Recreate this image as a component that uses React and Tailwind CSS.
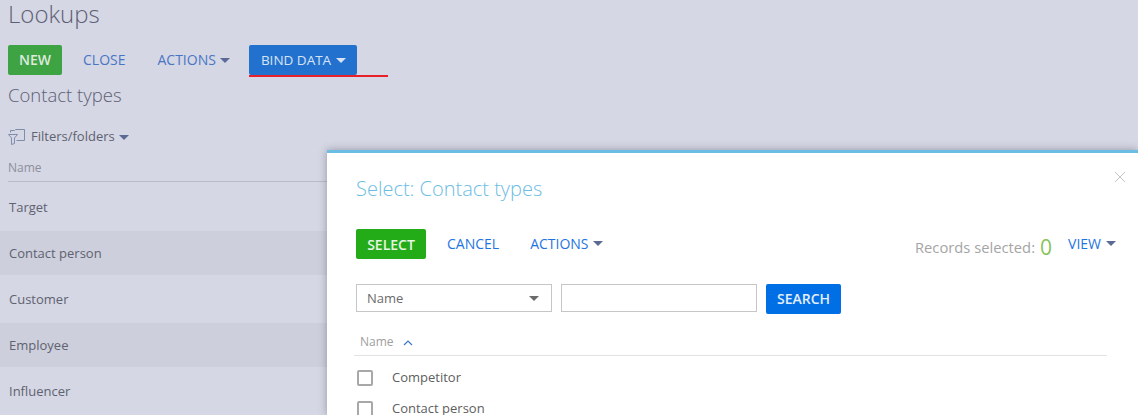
import React from "react";

function Caret({ className }) {
  return (
    <svg width="10" height="5" viewBox="0 0 10 5" className={className}>
      <path d="M0 0H10L5 5Z" fill="currentColor" />
    </svg>
  );
}

function FilterIcon() {
  return (
    <svg width="17" height="16" viewBox="0 0 17 16" fill="none" stroke="#7f8cab" strokeWidth="1" className="shrink-0">
      <path d="M2.5 3.5V1.5H6.5L7.5 0.5H16.5V11.5H8.5" />
      <path d="M0.5 5.5H9.5L6.5 9V14.5L3.5 15.5V9Z" />
    </svg>
  );
}

function Row({ label, alt }) {
  return (
    <div className={`flex items-center pl-[9px] pt-[2px] text-[13px] text-[#5f6270] ${alt ? "h-[44px] bg-[#cdcfdc]" : "h-[48px]"}`}>
      {label}
    </div>
  );
}

function ModalRow({ label }) {
  return (
    <div className="flex h-[31px] items-center pl-[1px] text-[13px] text-[#5e5e5e]">
      <span className="h-[16px] w-[16px] rounded-[2px] border-2 border-[#a8a8a8]" />
      <span className="ml-[19px]">{label}</span>
    </div>
  );
}

export default function App() {
  return (
    <div className="relative h-[415px] w-[1138px] overflow-hidden bg-[#d5d7e4] font-['Open_Sans',sans-serif]">
      <div className="w-[327px]">
        <h1 className="h-[45px] pl-[8px] text-[24px] font-light leading-[28px] text-[#5d6075]">Lookups</h1>
        <div className="flex w-[400px] items-stretch pl-[8px] text-[14px] leading-[30px]">
          <button className="h-[30px] w-[54px] rounded-[2px] bg-[#3ea343] font-semibold text-[#dfeadf]">NEW</button>
          <button className="ml-[21px] h-[30px] text-[#4a75c4]">CLOSE</button>
          <button className="ml-[32px] flex h-[30px] items-center text-[#4a75c4]">
            ACTIONS
            <Caret className="ml-[4px] text-[#5a6a94]" />
          </button>
          <div className="ml-[19px] h-[32px] w-[139px] border-b-2 border-b-[#e8202a]">
            <button className="flex h-[30px] w-[108px] items-center rounded-[2px] bg-[#2371ce] pl-[12px] text-[13.5px] text-[#d7e3f3]">
              BIND DATA
              <Caret className="ml-[5px] text-[#d7e3f3]" />
            </button>
          </div>
        </div>
        <h2 className="mt-[5px] h-[26px] pl-[8px] text-[18.5px] font-light leading-[26px] text-[#5d6075]">Contact types</h2>
        <div className="mt-[18px] flex h-[22px] items-center pl-[8px] text-[13px] text-[#5f6270]">
          <FilterIcon />
          <span className="ml-[6px]">Filters/folders</span>
          <Caret className="ml-[4px] mt-[1px] text-[#5a6a94]" />
        </div>
        <div className="mt-[11px] ml-[8px] h-[23px] border-b border-[#b9bbc8] text-[12px] leading-[18px] text-[#8d8f9c]">Name</div>
        <div className="mt-[1px]">
          <Row label="Target" />
          <Row label="Contact person" alt />
          <Row label="Customer" />
          <Row label="Employee" alt />
          <Row label="Influencer" />
        </div>
      </div>

      <div className="absolute left-[327px] top-[150px] h-[265px] w-[811px] border-t-[3px] border-[#6cbde3] bg-white shadow-[0_0_8px_rgba(70,72,95,0.45)]">
        <button className="absolute right-[12px] top-[18px] text-[#c4c4c4]" aria-label="Close">
          <svg width="12" height="12" viewBox="0 0 12 12" stroke="currentColor" strokeWidth="1" fill="none">
            <path d="M1 1L11 11M11 1L1 11" />
          </svg>
        </button>
        <div className="px-[29px]">
          <h2 className="mt-[23px] h-[30px] text-[20px] font-light leading-[26px] text-[#6cbde3]">Select: Contact types</h2>
          <div className="mt-[23px] flex h-[30px] items-center text-[14px]">
            <button className="h-[30px] w-[70px] rounded-[2px] bg-[#24ab18] font-semibold text-[#e6f5e4]">SELECT</button>
            <button className="ml-[21px] pb-[2px] text-[#1f74e0]">CANCEL</button>
            <button className="ml-[31px] flex items-center pb-[2px] text-[#1f74e0]">
              ACTIONS
              <Caret className="ml-[4px] text-[#5a6a94]" />
            </button>
            <div className="ml-auto mr-[-7px] flex items-center">
              <span className="mt-[6px] text-[14.75px] text-[#a5a5a5]">Records selected:</span>
              <span className="ml-[5px] mt-[6px] text-[21px] leading-[24px] text-[#86c35a]">0</span>
              <button className="ml-[16px] flex items-center pb-[2px] text-[#1f74e0]">
                VIEW
                <Caret className="ml-[5px] text-[#5a6a94]" />
              </button>
            </div>
          </div>
          <div className="mt-[25px] flex h-[30px] items-start">
            <div className="flex h-[28px] w-[196px] items-center justify-between border border-[#c6c6c6] pl-[10px] pr-[12px] pt-[1px] text-[13px] text-[#6b6b6b]">
              Name
              <Caret className="text-[#6b6b6b]" />
            </div>
            <div className="ml-[9px] h-[28px] w-[196px] border border-[#c6c6c6]" />
            <button className="ml-[9px] h-[30px] w-[75px] rounded-[2px] bg-[#006ee4] pb-[2px] text-[14px] font-semibold text-[#e3effc]">SEARCH</button>
          </div>
          <div className="mt-[15px] ml-[-2px] flex h-[27px] w-[753px] items-start border-b border-[#e2e2e2] pl-[6px] text-[12px] leading-[26px] text-[#a0a0a0]">
            Name
            <svg width="10" height="6" viewBox="0 0 10 6" fill="none" stroke="#3b78c4" strokeWidth="1.2" className="ml-[9px] mt-[11px]">
              <path d="M1 5L5 1L9 5" />
            </svg>
          </div>
          <div className="pt-[6px]">
            <ModalRow label="Competitor" />
            <ModalRow label="Contact person" />
          </div>
        </div>
      </div>
    </div>
  );
}
